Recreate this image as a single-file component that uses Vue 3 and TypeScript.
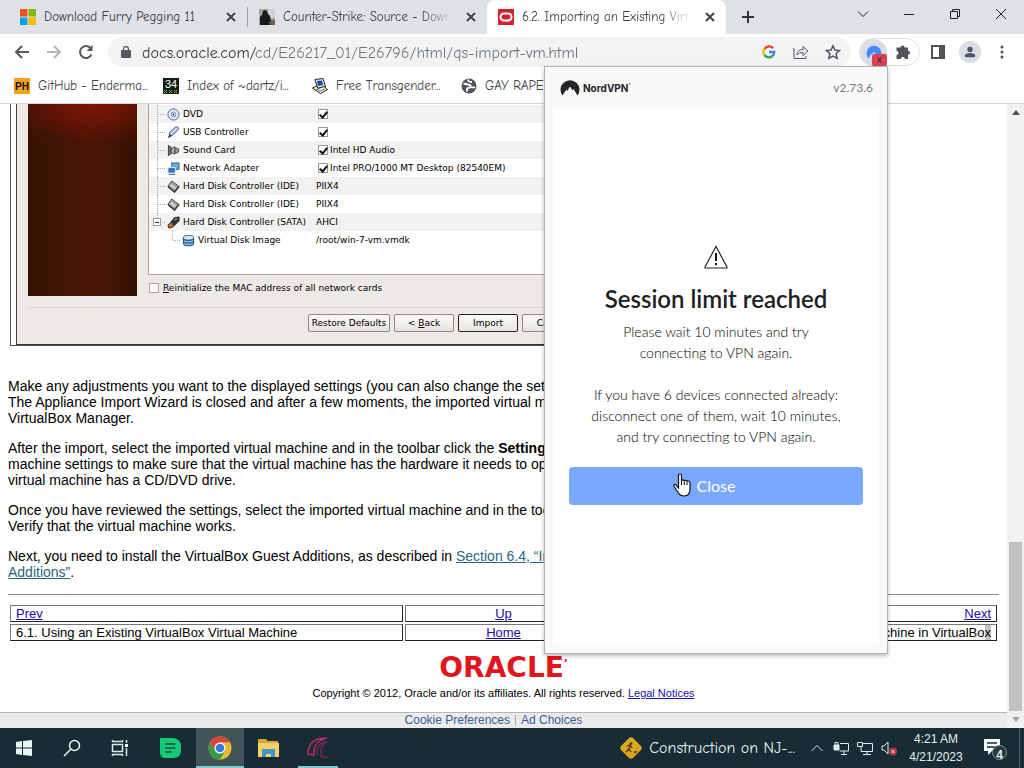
<script setup lang="ts">
import { ref } from 'vue'

interface Row {
  icon: string
  name: string
  value?: string
  check?: boolean
}

const devices: Row[] = [
  { icon: 'dvd', name: 'DVD', check: true },
  { icon: 'usb', name: 'USB Controller', check: true },
  { icon: 'sound', name: 'Sound Card', check: true, value: 'Intel HD Audio' },
  { icon: 'net', name: 'Network Adapter', check: true, value: 'Intel PRO/1000 MT Desktop (82540EM)' },
  { icon: 'ide', name: 'Hard Disk Controller (IDE)', value: 'PIIX4' },
  { icon: 'ide', name: 'Hard Disk Controller (IDE)', value: 'PIIX4' },
  { icon: 'sata', name: 'Hard Disk Controller (SATA)', value: 'AHCI' },
  { icon: 'disk', name: 'Virtual Disk Image', value: '/root/win-7-vm.vmdk' },
]

const address = ref('docs.oracle.com/cd/E26217_01/E26796/html/qs-import-vm.html')
</script>

<template>
  <div class="desktop">
    <header class="tabs">
      <div class="tab first">
        <svg class="fav" viewBox="0 0 16 16"><path fill="#f25022" d="M0 0h7.5v7.5H0z" /><path fill="#7fba00" d="M8.5 0H16v7.5H8.500z" /><path fill="#00a4ef" d="M0 8.500h7.500V16H0z" /><path fill="#ffb900" d="M8.500 8.500H16V16H8.500z" /></svg>
        <span class="tab-title">Download Furry Pegging 11</span>
        <button class="tab-x" aria-label="Close tab"><svg viewBox="0 0 10 10"><path d="M1 1l8 8M9 1L1 9" /></svg></button>
      </div>
      <div class="tab second">
        <svg class="fav" viewBox="0 0 16 16"><path fill="#a9a79c" d="M0 0h16v16H0z" /><path fill="#c9d4da" d="M9 0h7v9H9z" /><path fill="#7b5e4c" d="M10 11h6v5h-6z" /><path fill="#17191c" d="M1 16V8l2-2 1-4 2-1 2 1 1 3 2 2 1 5-2 1 1 3z" /></svg>
        <span class="tab-title fade">Counter-Strike: Source - Down</span>
        <button class="tab-x" aria-label="Close tab"><svg viewBox="0 0 10 10"><path d="M1 1l8 8M9 1L1 9" /></svg></button>
      </div>
      <div class="tab active">
        <svg class="fav" viewBox="0 0 16 16"><path fill="#d3222f" d="M0 0h16v16H0z" /><rect x="2.500" y="4.500" width="11" height="7" rx="3.500" fill="none" stroke="#fff" stroke-width="2" /></svg>
        <span class="tab-title fade">6.2. Importing an Existing Virtu</span>
        <button class="tab-x" aria-label="Close tab"><svg viewBox="0 0 10 10"><path d="M1 1l8 8M9 1L1 9" /></svg></button>
      </div>
      <button class="new-tab" aria-label="New tab"><svg viewBox="0 0 12 12"><path d="M6 0v12M0 6h12" /></svg></button>
      <div class="controls">
        <button aria-label="Search tabs"><svg viewBox="0 0 12 12"><path d="M1 3.500l5 5 5-5" /></svg></button>
        <button aria-label="Minimize"><svg viewBox="0 0 12 12"><path d="M1 6.500h10" /></svg></button>
        <button aria-label="Restore"><svg viewBox="0 0 12 12"><path d="M1.500 3.500h7v7h-7zM3.500 3.500v-2h7v7h-2" /></svg></button>
        <button aria-label="Close window"><svg viewBox="0 0 12 12"><path d="M1 1l10 10M11 1L1 11" /></svg></button>
      </div>
    </header>

    <div class="toolbar">
      <button class="tool" aria-label="Back"><svg viewBox="0 0 16 16" class="stroke"><path d="M15 8H2M8 2L2 8l6 6" /></svg></button>
      <button class="tool dim" aria-label="Forward"><svg viewBox="0 0 16 16" class="stroke"><path d="M1 8h13M8 2l6 6-6 6" /></svg></button>
      <button class="tool" aria-label="Reload"><svg viewBox="0 0 16 16" class="stroke"><path d="M13.500 10.500A6 6 0 1 1 12.500 4" /><path d="M14.500 1v6h-6z" fill="#55585c" stroke="none" /></svg></button>
      <div class="omnibox">
        <svg class="lock" viewBox="0 0 10 12"><path fill="#55585c" d="M1 4h8a1 1 0 0 1 1 1v6a1 1 0 0 1-1 1H1a1 1 0 0 1-1-1V5a1 1 0 0 1 1-1z" /><path d="M2.500 5V3a2.500 2.500 0 0 1 5 0v2" fill="none" stroke="#55585c" stroke-width="1.300" /></svg>
        <input v-model="address" class="address" type="text" aria-label="Address" />
        <button class="tool" aria-label="Google"><svg class="g" viewBox="0 0 16 16" fill="none" stroke-width="2.400"><path stroke="#ea4335" d="M3.500 5A5.300 5.300 0 0 1 12 4.200" /><path stroke="#fbbc05" d="M3.500 5a5.500 5.500 0 0 0 0 6" /><path stroke="#34a853" d="M3.500 11a5.300 5.300 0 0 0 8 1" /><path stroke="#4285f4" d="M8 8h5.200a5.500 5.500 0 0 1-1.700 4" /></svg></button>
        <button class="tool" aria-label="Share"><svg viewBox="0 0 16 16" class="thin"><path d="M1 4v10.500h12V12M4 11c0-4 3-5.500 6-5.500V2.500L15 7l-5 4.500v-3C7 8.500 5.500 9 4 11z" /></svg></button>
        <button class="tool" aria-label="Bookmark"><svg viewBox="0 0 16 16" class="star"><path d="M8 1.800l1.900 4.300 4.600.5-3.400 3.100 1 4.600L8 12l-4.100 2.300 1-4.600L1.500 6.600l4.600-.5z" /></svg></button>
      </div>
      <div class="extensions">
        <button class="nord-ext" aria-label="NordVPN">
          <svg viewBox="0 0 16 14"><path fill="#4687ff" d="M2.600 13.500A7.500 7.500 0 1 1 13.400 13.500L10.500 8.500 9.800 9.500 8 6.500 5.800 9.500 5 9z" /></svg>
          <span class="badge">x</span>
        </button>
        <button class="tool" aria-label="Extensions"><svg viewBox="0 0 16 16"><path fill="#505459" d="M5.500 3.500a2 2 0 0 1 4 0H13v3.200a2 2 0 0 1 0 4V15H9.800a2 2 0 0 0-4 0H1.500v-4a2 2 0 0 0 0-4V3.500z" /></svg></button>
      </div>
      <button class="tool" aria-label="Side panel"><svg viewBox="0 0 16 16"><path fill="#505459" fill-rule="evenodd" d="M1 1h14v14H1zM3 3v10h6V3z" /></svg></button>
      <button class="tool avatar" aria-label="Profile"><svg viewBox="0 0 16 16" fill="#4d5666"><circle cx="8" cy="5" r="3" /><path d="M2 14v-2c0-2 3-3 6-3s6 1 6 3v2z" /></svg></button>
      <button class="tool" aria-label="Menu"><svg viewBox="0 0 16 16" fill="#505459"><circle cx="8" cy="3" r="1.500" /><circle cx="8" cy="8" r="1.500" /><circle cx="8" cy="13" r="1.500" /></svg></button>
    </div>

    <nav class="bookmarks">
      <a href="#"><svg class="fav" viewBox="0 0 16 16"><path fill="#f7a11a" d="M0 0h16v16H0z" /><text x="8" y="12" text-anchor="middle" class="ph">PH</text></svg><span>GitHub - Enderma...</span></a>
      <a href="#"><svg class="fav" viewBox="0 0 16 16"><path fill="#10200f" d="M0 0h16v16H0z" /><text x="8" y="10" text-anchor="middle" class="rule">34</text><path d="M1 12l3 3M4 12l-3 3M6 12l3 3M9 12l-3 3M11 12l3 3M14 12l-3 3" stroke="#5fae50" /></svg><span>Index of ~dartz/i...</span></a>
      <a href="#"><svg class="fav" viewBox="0 0 16 16"><path d="M3 1.500l8-1 2.500 8-8 2z" fill="#ddd" stroke="#222" /><path d="M5 3l5-.5 1 4.500-5 1z" fill="#2840a8" /><path d="M.5 10l4-2 1.500 2.500 6-2 3.500 3-7 4z" fill="#eee" stroke="#222" /><path d="M4 11l4 2 5-2" stroke="#777" fill="none" /></svg><span>Free Transgender...</span></a>
      <a href="#"><svg class="fav" viewBox="0 0 16 16"><circle cx="8" cy="8" r="7.500" fill="#515458" /><path d="M2.500 6c3-1 4 1 6 1s1 3-1 3-2 2-1 3.500M7 1.500c0 2 2 2.500 4 2.500M10 9c2 0 3 1 4 0" stroke="#fff" stroke-width="1.800" fill="none" /></svg><span>GAY RAPE</span></a>
    </nav>

    <div class="viewport">
      <main class="page">
        <div class="article">
          <div class="figure">
            <div class="dialog">
              <div class="dialog-main">
                <div class="art"></div>
                <div class="dialog-right">
                  <div class="device-list">
                    <div v-for="(d, i) in devices" :key="i" class="device" :class="{ child: d.icon === 'disk' }">
                      <span class="branch"><i v-if="d.icon === 'sata'" class="minus"></i></span>
                      <span class="device-name">
                        <svg class="device-icon" viewBox="0 0 14 14">
                          <template v-if="d.icon === 'dvd'"><circle cx="7" cy="7" r="6" fill="#dce8f5" stroke="#456b91" /><circle cx="7" cy="7" r="2.500" fill="#fff" stroke="#6586a8" /><circle cx="7" cy="7" r="1" fill="#234" /></template>
                          <template v-else-if="d.icon === 'usb'"><path d="M2 12l1-5 5-5c2-2 6-1 4 2L7 9z" fill="#bdc3ed" stroke="#45508c" /><path d="M1 13l2-4 2 2z" fill="#333" /><path d="M5 8l5-5" stroke="#fff" /></template>
                          <template v-else-if="d.icon === 'sound'"><path d="M1.500 1.500l3 2v7l-3 2z" fill="#777" stroke="#333" /><path d="M4.500 5l4-2v8l-4-2z" fill="#bbb" stroke="#444" /><path d="M8.500 4.500h3l1 1v3l-1 1h-3z" fill="#999" stroke="#444" /></template>
                          <template v-else-if="d.icon === 'net'"><path d="M5 1h8v7H5z" fill="#72a9dc" stroke="#345f8b" /><path d="M1 6h8v6H1z" fill="#2f77b8" stroke="#dce9f3" /><path d="M2 13.500h7" stroke="#555" /></template>
                          <template v-else-if="d.icon === 'ide'"><path d="M5 1l8 6-5 6-7-6z" fill="#a5a5a2" stroke="#444" /><path d="M1 7l7 6 5-6" stroke="#333" stroke-width="1.500" fill="none" /><path d="M4 5l5 4" stroke="#ddd" stroke-width="2" /></template>
                          <template v-else-if="d.icon === 'sata'"><path d="M1 10l7-8 5-1v4l-7 7-4 1z" fill="#3a3330" stroke="#222" /><path d="M1 10l3-3 3 3-3 3z" fill="#c86a24" /><path d="M8 4l3-1" stroke="#ccc" /></template>
                          <template v-else><path d="M1.500 3.500v7c0 3 11 3 11 0v-7z" fill="#2e76b3" stroke="#173d63" /><ellipse cx="7" cy="4" rx="5.500" ry="2.500" fill="#d2e9f5" stroke="#31597f" /><path d="M2 7c2 2 8 2 10 0M2 10c2 2 8 2 10 0" stroke="#b8dcf1" fill="none" /></template>
                        </svg>{{ d.name }}</span>
                      <label class="device-value">
                        <input v-if="d.check" type="checkbox" checked :aria-label="d.name" />{{ d.value }}
                      </label>
                    </div>
                  </div>
                  <label class="reinit"><input type="checkbox" /><span><u>R</u>einitialize the MAC address of all network cards</span></label>
                </div>
              </div>
              <div class="dialog-buttons">
                <button class="wide">Restore Defaults</button>
                <button>&lt; <u>B</u>ack</button>
                <button class="default">Import</button>
                <button>Cancel</button>
              </div>
            </div>
          </div>

          <p>Make any adjustments you want to the displayed settings (you can also change the settings<br />The Appliance Import Wizard is closed and after a few moments, the imported virtual machine<br />VirtualBox Manager.</p>
          <p>After the import, select the imported virtual machine and in the toolbar click the <b>Settings</b><br />machine settings to make sure that the virtual machine has the hardware it needs to operate<br />virtual machine has a CD/DVD drive.</p>
          <p>Once you have reviewed the settings, select the imported virtual machine and in the toolbar<br />Verify that the virtual machine works.</p>
          <p>Next, you need to install the VirtualBox Guest Additions, as described in <a href="#">Section 6.4, “Installing<br />Additions”</a>.</p>
          <hr />
          <table>
            <tbody>
              <tr><td class="side"><a href="#">Prev</a></td><td class="mid"><a href="#">Up</a></td><td class="side end"><a href="#">Next</a></td></tr>
              <tr><td>6.1. Using an Existing VirtualBox Virtual Machine</td><td class="mid"><a href="#">Home</a></td><td class="end">Machine in VirtualBo<span class="sel">x</span></td></tr>
            </tbody>
          </table>
          <div class="oracle">ORACLE<sup>’</sup></div>
          <div class="copyright">Copyright © 2012, Oracle and/or its affiliates. All rights reserved. <a href="#">Legal Notices</a></div>
        </div>
        <footer class="cookies"><a href="#">Cookie Preferences</a><i></i><a href="#">Ad Choices</a></footer>
      </main>
      <div class="scrollbar">
        <svg viewBox="0 0 17 17"><path fill="#505050" d="M5 11l4-5 4 5z" /></svg>
        <div class="thumb"></div>
        <svg viewBox="0 0 17 17"><path fill="#a3a3a3" d="M5 6h8l-4 5z" /></svg>
      </div>
    </div>

    <section class="popup">
      <div class="popup-head">
        <svg class="nord-logo" viewBox="0 0 20 16"><path fill="#24262b" d="M2.500 15.500A9.500 9.500 0 1 1 17.500 15.500L13.500 9 12.500 10.500 10 6.500 7.200 11 6.300 9.700z" /></svg>
        <b>NordVPN<sup>’</sup></b>
        <span>v2.73.6</span>
      </div>
      <div class="popup-body">
        <svg class="warn" viewBox="0 0 24 24"><path d="M12 1.500L23 22a.7.7 0 0 1-.7 1H1.700a.7.7 0 0 1-.7-1z" fill="none" stroke="#222" stroke-width="1.200" /><path d="M12 8v8M12 18v2" stroke="#111" stroke-width="2" /></svg>
        <h1>Session limit reached</h1>
        <p>Please wait 10 minutes and try<br />connecting to VPN again.</p>
        <p>If you have 6 devices connected already:<br />disconnect one of them, wait 10 minutes,<br />and try connecting to VPN again.</p>
        <button class="close">Close
          <svg class="cursor" viewBox="0 0 18 24"><path d="M5.500 15V2.500a1.500 1.500 0 0 1 3 0V8c0-1.500 2.800-1.500 2.800.3 0-1.300 2.700-1.300 2.700.5 0-1.200 3-1.200 3 .9V16c0 4-2 7-6 7-4 0-5-2-7-5l-3-5c-.7-1.500 1-2.300 2-1.200z" fill="#fff" stroke="#111" stroke-width="1.200" /><path d="M8.500 8v4M11.300 8.500V12M14 9v3" stroke="#111" /></svg>
        </button>
      </div>
    </section>

    <footer class="taskbar">
      <button class="task" aria-label="Start"><svg viewBox="0 0 24 24"><path fill="#e6f6f7" d="M4 6l6-1v6.500H4zM11 5l9-1v7.500h-9zM4 12.500h6V19l-6-1zM11 12.500h9V20l-9-1z" /></svg></button>
      <button class="task" aria-label="Search"><svg viewBox="0 0 24 24" fill="none" stroke="#e6f6f7" stroke-width="1.500"><circle cx="14.500" cy="9.500" r="5" /><path d="M11 13l-7 7" /></svg></button>
      <button class="task" aria-label="Task view"><svg viewBox="0 0 24 24" fill="none" stroke="#d5e9eb" stroke-width="1.500"><path d="M4.500 8.500h10v7h-10zM4 5.500h11M4 18.500h11M4.500 4v2M14.500 4v2M4.500 18v2M14.500 18v2M18.500 4v3M18.500 12v8" /><path d="M17 8h3v3h-3z" fill="#fff" stroke="none" /></svg></button>
      <button class="task broad" aria-label="Notes"><svg viewBox="0 0 24 24"><path d="M2 2h12c6 0 9 4 9 8v4c0 5-3 8-8 8H8c-4 0-6-2-6-6z" fill="#16c978" /><path d="M7.500 8h10M7.500 12h10M7.500 16h6" stroke="#0b4b38" stroke-width="1.500" /></svg></button>
      <button class="task current" aria-label="Chrome"><svg viewBox="0 0 24 24"><circle cx="12" cy="12" r="11.500" fill="#e8b92e" /><path d="M2 6.300A11.500 11.500 0 0 1 22 6.300H12L7 15z" fill="#d9453c" /><path d="M2 6.300A11.500 11.500 0 0 0 12 23.500L17 15H7z" fill="#319b4b" /><circle cx="12" cy="12" r="5.500" fill="#fff" /><circle cx="12" cy="12" r="4.300" fill="#3978dc" /></svg></button>
      <button class="task" aria-label="Files"><svg viewBox="0 0 24 24"><path d="M2 3h8l2 2h10v16H2z" fill="#d7a83c" /><path d="M2 7h21v14H2z" fill="#f4d06b" /><path d="M6 21v-8h13v8h-4v-3h-5v3z" fill="#3c98c8" /></svg></button>
      <button class="task broad run" aria-label="Recorder"><svg viewBox="0 0 24 24" fill="none" stroke="#b32b68"><path d="M2 18C2 7 9 2 21 2c-9 2-14 8-13 17z" stroke-width="1.500" /><path d="M11 19c-1-8 3-12 9-13-5 4-6 7-5 14 1 1 4 2 7 1" stroke="#74294b" stroke-width="1.500" /></svg></button>
      <div class="tray">
        <button class="news"><svg viewBox="0 0 24 24"><path d="M14 2l8 8c1 1 1 3 0 4l-8 8c-1 1-3 1-4 0l-8-8c-1-1-1-3 0-4l8-8c1-1 3-1 4 0z" fill="#dba51d" /><circle cx="12" cy="7.500" r="1.300" fill="#3e351d" /><path d="M8 10l3-1 2 3M11 10l-2 4-2 2M10 13l2 3M15 16h3" stroke="#3e351d" stroke-width="1.300" fill="none" /></svg><span>Construction on NJ-...</span></button>
        <button class="tray-icon" aria-label="Hidden icons"><svg viewBox="0 0 16 16"><path d="M2.500 11L8 5.500l5.500 5.500" /></svg></button>
        <button class="tray-icon" aria-label="Device"><svg viewBox="0 0 16 16"><path d="M7 3.500h8.500V11h-9M8 14.500h6M11 11v3" /><path d="M1 5h5v5H1z" fill="#dcecee" /><path d="M2 5V2.500h3V5" /></svg></button>
        <button class="tray-icon" aria-label="Network"><svg viewBox="0 0 16 16"><path d="M6 3.500h9.500v8H4V7M6 14.500h8M10 11v3M.5 2.500h5v4h-5z" /></svg></button>
        <button class="tray-icon" aria-label="Volume muted"><svg viewBox="0 0 16 16"><path d="M1 6h2l4-4v12l-4-4H1z" /><circle cx="12" cy="11.500" r="4" fill="#b8323d" stroke="none" /><path d="M10.500 10l3 3M13.500 10l-3 3" /></svg></button>
        <div class="clock"><span>4:21 AM</span><span>4/21/2023</span></div>
        <button class="notice" aria-label="Notifications"><svg viewBox="0 0 24 24"><path d="M1 3h16v12H9l-4 4v-4H1z" fill="#f2fbfb" /><path d="M4 7h10M4 11h10" stroke="#182c33" stroke-width="1.500" /><circle cx="16.500" cy="16.500" r="7" fill="#27373d" stroke="#84979b" /></svg><b>4</b></button>
      </div>
    </footer>
  </div>
</template>

<style>
body { margin: 0; }
</style>

<style scoped>
* { box-sizing: border-box; }
button { border: 0; padding: 0; margin: 0; background: none; font: inherit; color: inherit; }
svg { display: block; flex: none; }
.desktop { position: relative; height: 100vh; display: flex; flex-direction: column; overflow: hidden; background: #fff; font-family: "Comic Sans MS", "Comic Neue", "Noto Sans", sans-serif; color: #3c4043; }
.fav { width: 16px; height: 16px; }

/* tab strip */
.tabs { flex: none; height: 34px; display: flex; background: #dee1e6; }
.tab { display: flex; align-items: center; gap: 8px; height: 34px; padding-top: 1px; font-size: 13px; }
.tab-title { flex: 1; min-width: 0; overflow: hidden; white-space: nowrap; line-height: 20px; }
.fade { mask-image: linear-gradient(90deg, #000 80%, transparent 97%); }
.tab-x { width: 14px; height: 14px; display: grid; place-items: center; }
.tab-x svg { width: 10px; height: 10px; stroke: #404347; stroke-width: 2; }
.first { width: 248px; padding: 0 9px 0 20px; border-right: 1px solid #9ea1a6; border-image: linear-gradient(transparent 8px, #9ea1a6 8px, #9ea1a6 26px, transparent 26px) 1; }
.second { width: 239px; padding: 0 9px 0 11px; }
.active { width: 239px; padding: 0 9px 0 11px; background: #fff; border-radius: 8px 8px 0 0; }
.new-tab { width: 44px; display: grid; place-items: center; }
.new-tab svg { width: 12px; height: 12px; stroke: #333; stroke-width: 2; }
.controls { margin-left: auto; display: flex; height: 28px; }
.controls button { width: 46px; display: grid; place-items: center; }
.controls svg { width: 12px; height: 12px; fill: none; stroke: #222; }

/* toolbar */
.toolbar { flex: none; height: 36px; display: flex; align-items: center; padding: 0 6px; }
.tool { flex: none; width: 32px; height: 28px; display: grid; place-items: center; }
.tool svg { width: 16px; height: 16px; }
.stroke { fill: none; stroke: #55585c; stroke-width: 2; }
.dim { opacity: .45; }
.omnibox { flex: 1; height: 30px; margin: 0 8px 0 6px; padding: 0 2px 0 13px; border-radius: 15px; background: #f1f3f4; display: flex; align-items: center; }
.lock { width: 10px; height: 12px; margin-right: 11px; }
.address { flex: 1; min-width: 0; border: 0; padding: 2px 0 0; outline: 0; background: linear-gradient(90deg, #303236 114px, #707377 114px); background-clip: text; color: transparent; font: 16px/22px "Comic Sans MS", "Comic Neue", "Noto Sans", sans-serif; }
.thin { fill: none; stroke: #55585c; stroke-width: 1; }
.star { fill: none; stroke: #505459; stroke-width: 1.5; }
.extensions { display: flex; height: 28px; border: 1px solid #dcdfe2; border-radius: 14px; margin-right: 2px; align-items: center; }
.nord-ext { position: relative; width: 27px; height: 27px; border-radius: 14px; background: #d9dde5; display: grid; place-items: center; }
.nord-ext svg { width: 16px; height: 14px; }
.badge { position: absolute; left: 12px; top: 15px; width: 15px; height: 12px; border-radius: 2px; background: #d84352; color: #5d1523; font: 10px/11px "Noto Sans", sans-serif; text-align: center; }
.avatar svg { width: 22px; height: 22px; padding: 4px; border-radius: 11px; background: #dadde3; }

/* bookmarks */
.bookmarks { flex: none; height: 34px; display: flex; align-items: center; gap: 16px; padding: 0 14px 1px; border-bottom: 1px solid #d5d5d5; font-size: 13px; }
.bookmarks a { display: flex; align-items: center; gap: 8px; color: #3c4043; text-decoration: none; white-space: nowrap; }
.bookmarks a span { width: 109px; line-height: 20px; }
.ph { font: bold 10px "Liberation Sans", sans-serif; fill: #111; }
.rule { font: 11px "Liberation Sans", sans-serif; fill: #fff; }

/* page */
.viewport { flex: 1; min-height: 0; display: flex; font-family: "Liberation Sans", Arial, sans-serif; color: #000; }
.page { flex: 1; min-width: 0; display: flex; flex-direction: column; overflow: hidden; }
.article { flex: 1; padding: 0 8px; font-size: 14px; line-height: 16px; }
.article p { margin: 0 0 14px; white-space: nowrap; }
.article p a { color: #2b6583; }
.figure { width: 560px; margin: 0 2px 32px; padding-left: 5px; border: 1px solid #555; border-top: 0; }
.dialog { border-left: 1px solid #444; border-bottom: 1px solid #333; background: #edeae5; padding: 0 0 12px 11px; font: 9px/18px "DejaVu Sans", sans-serif; }
.dialog-main { display: flex; gap: 11px; padding-bottom: 8px; border-bottom: 1px solid #dedad4; }
.art { width: 109px; height: 192px; background: radial-gradient(80px 40px at 60% 0, #7d1605, transparent), linear-gradient(#4d0f05aa, transparent 25%), linear-gradient(90deg, #351303, #3c1403 20%, #4a1405 55%, #431404 75%, #341103); }
.dialog-right { flex: 1; }
.device-list { height: 171px; background: #fff; border: 1px solid #aaa59d; border-top: 0; padding-top: 1px; }
.device { display: flex; height: 18px; line-height: 19px; white-space: nowrap; }
.device:nth-child(odd) { background: #f3f2f0; }
.branch { position: relative; width: 17px; margin-right: 1px; }
.branch::before { content: ""; position: absolute; left: 8px; top: 0; bottom: 0; border-left: 1px dotted #aaa; }
.branch::after { content: ""; position: absolute; left: 9px; right: 1px; top: 9px; border-top: 1px dotted #aaa; }
.device:nth-child(7) .branch::before { bottom: 9px; }
.child .branch { width: 32px; }
.child .branch::before { left: 23px; bottom: 9px; }
.child .branch::after { left: 24px; }
.minus { position: absolute; z-index: 1; left: 4px; top: 5px; width: 8px; height: 8px; border: 1px solid #999; background: linear-gradient(#333, #333) center / 4px 1px no-repeat #fff; }
.device-name { width: 149px; display: flex; align-items: center; gap: 3px; }
.child .device-name { width: 134px; gap: 3px; }
.device-icon { width: 13px; height: 13px; }
.device-value { display: flex; align-items: center; }
.dialog input { appearance: none; width: 10px; height: 10px; margin: 0 2px; border: 1px solid #aaa59d; background: #fff; }
.dialog input:checked { border-color: #999; }
.dialog input:checked::after { content: ""; display: block; width: 3px; height: 6px; margin: 0 0 0 2px; border: solid #111; border-width: 0 2px 2px 0; transform: rotate(40deg); }
.reinit { display: flex; align-items: center; gap: 2px; height: 26px; margin-bottom: -2px; }
.reinit input { margin: 0 2px 0 1px; }
.dialog-buttons { display: flex; gap: 4px; padding: 6px 0 0 280px; }
.dialog-buttons button { flex: none; width: 60px; height: 18px; border: 1px solid #8f8a82; border-radius: 2px; background: linear-gradient(#fbfaf9, #e8e5e0); line-height: 16px; white-space: nowrap; }
.dialog-buttons .wide { width: 82px; }
.dialog-buttons .default { border-color: #222; }
hr { margin: 14px 0 8px; border: 0; border-top: 1px solid #8d8d8d; }
table { width: 100%; border-collapse: separate; border-spacing: 2px; font-size: 13px; }
td { height: 17px; padding: 0 5px; border: 1px solid #333; border-color: #777 #222 #222 #777; line-height: 15px; }
.side { width: 40%; }
.mid { text-align: center; }
.end { text-align: right; }
td a, .copyright a { color: #1a0dab; }
.sel { background: #c4c4c4; }
.oracle { margin-top: 11px; height: 28px; text-align: center; color: #e2151c; font: bold 28px/28px "DejaVu Sans", sans-serif; }
.oracle sup { font-size: 10px; line-height: 1px; vertical-align: 10px; }
.copyright { margin-top: 3px; text-align: center; font-size: 11px; }
.cookies { height: 16px; display: flex; justify-content: center; align-items: center; border-top: 1px solid #b5b5b5; background: #ebebeb; font-size: 12px; line-height: 15px; padding-right: 20px; }
.cookies a { color: #3b5c9c; text-decoration: none; }
.cookies i { height: 11px; margin: 0 5px; border-left: 1px solid #aaa; }
.scrollbar { width: 17px; flex: none; display: flex; flex-direction: column; background: #f1f1f1; }
.scrollbar svg { width: 17px; height: 17px; }
.thumb { flex: none; height: 169px; margin: auto 2px 0; background: #c1c1c1; }

/* VPN popup */
.popup { position: absolute; top: 66px; right: 136px; width: 344px; height: 588px; display: flex; flex-direction: column; background: #f9f9f9; border: 1px solid #b3b3b3; box-shadow: 0 2px 4px #0004; font-family: Lato, sans-serif; }
.popup-head { display: flex; align-items: center; height: 41px; padding: 0 14px 0 15px; }
.nord-logo { width: 20px; height: 16px; margin-right: 3px; }
.popup-head b { font: bold 10px/16px Inter, sans-serif; color: #222429; }
.popup-head sup { font-size: 6px; line-height: 1px; }
.popup-head span { margin-left: auto; font-size: 12px; color: #77797c; }
.popup-body { flex: 1; margin: 0 8px 8px; padding: 137px 16px 0; background: #fff; text-align: center; color: #000; }
.warn { width: 24px; height: 24px; margin: 0 auto; }
h1 { margin: 14px 0 6px; font-size: 24px; line-height: 32px; font-weight: 600; color: #1d2023; }
.popup-body p { margin: 0 0 21px; font-size: 14px; font-weight: 300; line-height: 21px; white-space: nowrap; }
.close { position: relative; width: 100%; height: 38px; margin-top: -1px; border-radius: 4px; background: #7aa7ff; color: #fff; font-size: 16px; line-height: 38px; }
.cursor { position: absolute; left: 104px; top: 6px; width: 18px; height: 24px; }

/* taskbar */
.taskbar { flex: none; height: 40px; display: flex; background: #182c33; color: #e2f0f2; }
.task { width: 48px; display: grid; place-items: center; }
.task svg { width: 24px; height: 24px; }
.broad { width: 52px; }
.current { background: #40545a; box-shadow: inset 0 -2px #84c8d2; }
.run { background: linear-gradient(#84c8d2, #84c8d2) center bottom / 40px 2px no-repeat; }
.tray { margin-left: auto; display: flex; align-items: center; border-right: 1px solid #52636a; margin-right: 4px; }
.news { display: flex; align-items: center; gap: 6px; font-size: 16px; white-space: nowrap; margin-right: 10px; }
.news svg { width: 24px; height: 24px; }
.tray-icon { width: 24px; height: 40px; display: grid; place-items: center; }
.tray-icon svg { width: 16px; height: 16px; fill: none; stroke: #dcecee; }
.clock { width: 70px; display: flex; flex-direction: column; align-items: center; font: 12px/18px "Liberation Sans", sans-serif; }
.notice { position: relative; width: 48px; height: 40px; display: grid; place-items: center; }
.notice svg { width: 24px; height: 24px; }
.notice b { position: absolute; left: 24px; top: 19px; width: 9px; font: bold 12px/16px "Liberation Sans", sans-serif; }
</style>
